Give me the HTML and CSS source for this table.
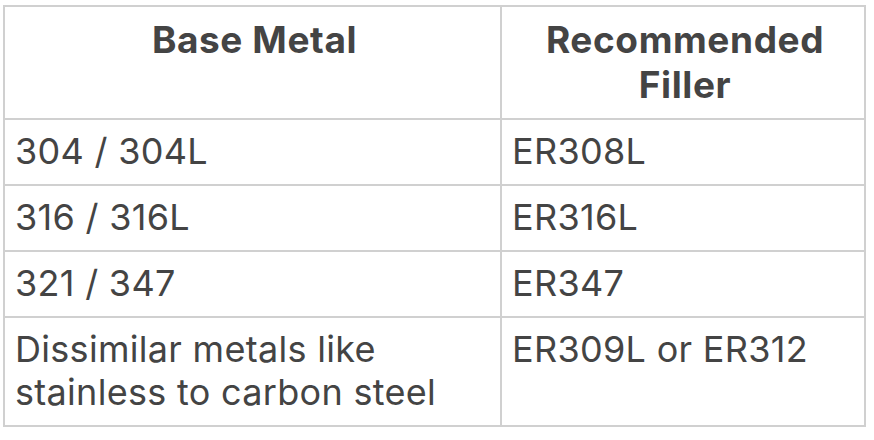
FILE: index.html
```html
<!DOCTYPE html>
<html lang="en">
<head>
<meta charset="utf-8">
<title>Filler Metals</title>
<link rel="stylesheet" href="styles.css">
</head>
<body>
<table class="filler-table">
  <colgroup>
    <col class="col-base">
    <col class="col-filler">
  </colgroup>
  <thead>
    <tr>
      <th>Base Metal</th>
      <th>Recommended Filler</th>
    </tr>
  </thead>
  <tbody>
    <tr><td>304 / 304L</td><td>ER308L</td></tr>
    <tr><td>316 / 316L</td><td>ER316L</td></tr>
    <tr><td>321 / 347</td><td>ER347</td></tr>
    <tr><td>Dissimilar metals like stainless to carbon steel</td><td>ER309L or ER312</td></tr>
  </tbody>
</table>
</body>
</html>
```

FILE: styles.css
```css
html, body {
  margin: 0;
  padding: 0;
  background: #ffffff;
}

body {
  padding: 5px 0 0 3px;
  font-family: Inter, "Noto Sans", "Liberation Sans", sans-serif;
  color: #444444;
}

.filler-table {
  border-collapse: collapse;
  width: 861px;
  table-layout: fixed;
}

.col-base { width: 497px; }
.col-filler { width: 364px; }

.filler-table th,
.filler-table td {
  border: 2px solid #d0d0d0;
  padding: 10px 6px 11px 10px;
  vertical-align: top;
}

.filler-table th {
  font-size: 37px;
  font-weight: 700;
  letter-spacing: 0.6px;
  text-align: center;
  line-height: 45px;
}

.filler-table td {
  font-size: 36px;
  font-weight: 400;
  letter-spacing: 0.3px;
  text-align: left;
  line-height: 43px;
}
```
